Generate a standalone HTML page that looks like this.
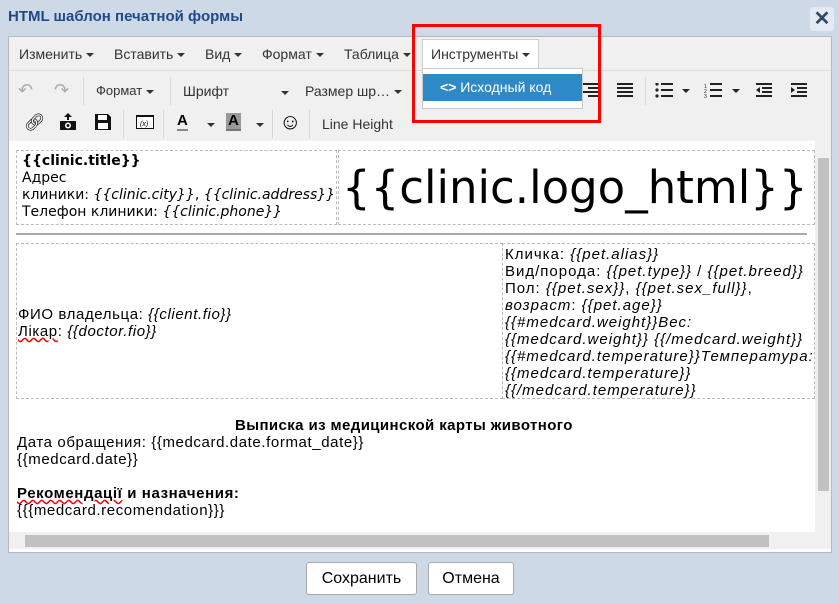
<!DOCTYPE html>
<html><head><meta charset="utf-8"><style>
*{margin:0;padding:0;box-sizing:border-box}
body{width:839px;height:604px;background:#cdd9e6;font-family:"Liberation Sans",sans-serif;position:relative;overflow:hidden;color:#000}
.a{position:absolute;white-space:nowrap}
.title{left:8px;top:8px;font-size:15px;font-weight:bold;color:#1e4a8a}
.close{left:810px;top:7px;width:24px;height:24px;background:#e3eaf2;border-radius:3px;color:#2d4a6e;font-size:20px;font-weight:bold;text-align:center;line-height:24px}
.ed{left:8px;top:36px;width:824px;height:517px;background:#f0f0f0;border:1px solid #b8b8b8}
.mb{font-size:14px;color:#333}
.car{display:inline-block;width:0;height:0;border-left:4px solid transparent;border-right:4px solid transparent;border-top:4px solid #333;vertical-align:middle;margin-left:4px}
.sep{position:absolute;width:1px;background:#d8d8d8}
.ct{left:9px;top:141px;width:806px;height:391px;background:#fff}
.v{font-family:"DejaVu Sans",sans-serif;font-size:14px}
.n{font-size:15px;letter-spacing:0.6px}
i{font-style:italic}
.btn{position:absolute;top:562px;height:33px;background:#fff;border:1px solid #aaa;border-radius:3px;font-size:16px;text-align:center;line-height:31px}
</style></head><body>
<div class="a title">HTML шаблон печатной формы</div>
<div class="a close">✕</div>
<div class="a ed"></div>
<div class="a" style="left:9px;top:70px;width:822px;height:1px;background:#ddd"></div>
<div class="a mb" style="left:19px;top:46px">Изменить<span class="car"></span></div>
<div class="a mb" style="left:114px;top:46px">Вставить<span class="car"></span></div>
<div class="a mb" style="left:205px;top:46px">Вид<span class="car"></span></div>
<div class="a mb" style="left:262px;top:46px">Формат<span class="car"></span></div>
<div class="a mb" style="left:344px;top:46px">Таблица<span class="car"></span></div>
<div class="a" style="left:422px;top:39px;width:117px;height:31px;background:#fff;border:1px solid #ccc;border-bottom:none"></div>
<div class="a mb" style="left:431px;top:46px">Инструменты<span class="car"></span></div>
<div class="a" style="left:18px;top:80px;font-size:18px;color:#aaa">↶</div>
<div class="a" style="left:54px;top:80px;font-size:18px;color:#aaa">↷</div>
<div class="sep" style="left:83px;top:77px;height:28px"></div>
<div class="a mb" style="left:96px;top:83px;font-size:13px">Формат<span class="car"></span></div>
<div class="sep" style="left:170px;top:77px;height:28px"></div>
<div class="a mb" style="left:183px;top:83px">Шрифт</div>
<div class="a" style="left:277px;top:84px"><span class="car"></span></div>
<div class="a mb" style="left:305px;top:83px">Размер шр…<span class="car"></span></div>
<svg class="a" style="left:583px;top:83px" width="230" height="16">
<g fill="#222"><rect x="0" y="0" width="15" height="2"/><rect x="5" y="4" width="10" height="2"/><rect x="0" y="8" width="15" height="2"/><rect x="5" y="12" width="10" height="2"/>
<rect x="34" y="0" width="16" height="2"/><rect x="34" y="4" width="16" height="2"/><rect x="34" y="8" width="16" height="2"/><rect x="34" y="12" width="16" height="2"/>
<circle cx="74" cy="1" r="1.6"/><circle cx="74" cy="7" r="1.6"/><circle cx="74" cy="13" r="1.6"/><rect x="78" y="0" width="12" height="2"/><rect x="78" y="6" width="12" height="2"/><rect x="78" y="12" width="12" height="2"/>
<path d="M99 6h8l-4 4z"/>
<text x="121" y="5" font-size="5">1</text><text x="121" y="10" font-size="5">2</text><text x="121" y="15" font-size="5">3</text><rect x="127" y="0" width="12" height="2"/><rect x="127" y="6" width="12" height="2"/><rect x="127" y="12" width="12" height="2"/>
<path d="M149 6h8l-4 4z"/>
<rect x="173" y="0" width="16" height="2"/><rect x="179" y="4" width="10" height="2"/><rect x="179" y="8" width="10" height="2"/><rect x="173" y="12" width="16" height="2"/><path d="M173 7l4-3v6z"/>
<rect x="208" y="0" width="16" height="2"/><rect x="214" y="4" width="10" height="2"/><rect x="214" y="8" width="10" height="2"/><rect x="208" y="12" width="16" height="2"/><path d="M212 7l-4-3v6z"/>
</g></svg>
<div class="sep" style="left:645px;top:77px;height:28px"></div>
<div class="a" style="left:24px;top:113px;font-size:17px">🔗︎</div>
<svg class="a" style="left:59px;top:113px" width="18" height="18"><path d="M9 0l4 4h-3v3h-2v-3h-3z M1 8h16v9h-16z" fill="#111"/><circle cx="9" cy="12.5" r="3" fill="#fff"/><circle cx="9" cy="12.5" r="1.5" fill="#111"/></svg>
<svg class="a" style="left:95px;top:114px" width="16" height="16"><path d="M0 0h13l3 3v13h-16z" fill="#111"/><rect x="3" y="1" width="9" height="5" fill="#fff"/><rect x="3" y="9" width="10" height="6" fill="#fff"/></svg>
<div class="sep" style="left:123px;top:110px;height:28px"></div>
<svg class="a" style="left:136px;top:115px" width="18" height="14"><rect x="0.5" y="0.5" width="17" height="13" fill="#fff" stroke="#111"/><rect x="0" y="0" width="18" height="2" fill="#111"/><text x="4" y="11" font-size="7" font-style="italic">(x)</text></svg>
<div class="sep" style="left:163px;top:110px;height:28px"></div>
<div class="a" style="left:177px;top:113px;font-size:15px;font-weight:bold;border-bottom:2px solid #888;line-height:16px">A</div>
<div class="a" style="left:203px;top:116px"><span class="car"></span></div>
<div class="a" style="left:226px;top:113px;font-size:15px;font-weight:bold;background:#999;border-bottom:2px solid #777;line-height:16px;padding:0 2px">A</div>
<div class="a" style="left:252px;top:116px"><span class="car"></span></div>
<div class="sep" style="left:272px;top:110px;height:28px"></div>
<div class="a" style="left:279px;top:109px;font-size:22px">☺</div>
<div class="sep" style="left:309px;top:110px;height:28px"></div>
<div class="a mb" style="left:322px;top:116px">Line Height</div>
<div class="a" style="left:422px;top:68px;width:161px;height:41px;background:#fff;border:1px solid #ccc"></div>
<div class="a" style="left:423px;top:74px;width:159px;height:27px;background:#2d8ac7;color:#fff;font-size:14px;line-height:27px;padding-left:17px"><b>&lt;&gt;</b> Исходный код</div>
<div class="a" style="left:412px;top:24px;width:189px;height:99px;border:3px solid #f00"></div>
<div class="a ct"></div>
<div class="a" style="left:16px;top:150px;width:321px;height:75px;border:1px dashed #bbb"></div>
<div class="a" style="left:338px;top:150px;width:477px;height:75px;border:1px dashed #bbb"></div>
<div class="a v" style="left:22px;top:153px;line-height:17px"><b>{{clinic.title}}</b><br>Адрес<br>клиники: <i>{{clinic.city}}</i>, <i>{{clinic.address}}</i><br>Телефон клиники: <i>{{clinic.phone}}</i></div>
<div class="a" style="left:342px;top:158px;font-family:'DejaVu Sans',sans-serif;font-size:45px;line-height:60px">{{clinic.logo_html}}</div>
<div class="a" style="left:16px;top:233px;width:791px;height:2px;background:#aaa"></div>
<div class="a" style="left:16px;top:243px;width:487px;height:156px;border:1px dashed #bbb"></div>
<div class="a" style="left:502px;top:243px;width:313px;height:156px;border:1px dashed #bbb"></div>
<div class="a n" style="left:18px;top:306px;line-height:17px">ФИО владельца: <i>{{client.fio}}</i><br><span style="text-decoration:underline wavy red">Лікар</span>: <i>{{doctor.fio}}</i></div>
<div class="a n" style="left:505px;top:246px;line-height:17px;letter-spacing:1px">Кличка: <i>{{pet.alias}}</i><br>Вид/порода: <i>{{pet.type}}</i> / <i>{{pet.breed}}</i><br>Пол: <i>{{pet.sex}}</i>, <i>{{pet.sex_full}}</i>,<br><i>возраст</i>: <i>{{pet.age}}</i><br><i>{{#medcard.weight}}Вес:</i><br><i>{{medcard.weight}} {{/medcard.weight}}</i><br><i>{{#medcard.temperature}}Температура:</i><br><i>{{medcard.temperature}}</i><br><i>{{/medcard.temperature}}</i></div>
<div class="a n" style="left:235px;top:417px;font-weight:bold;letter-spacing:0.4px">Выписка из медицинской карты животного</div>
<div class="a n" style="left:17px;top:434px;line-height:17px">Дата обращения: {{medcard.date.format_date}}<br>{{medcard.date}}<br><br><b><span style="text-decoration:underline wavy red">Рекомендації</span> и назначения:</b><br>{{{medcard.recomendation}}}</div>
<div class="a" style="left:815px;top:141px;width:16px;height:391px;background:#f0f0f0"></div>
<div class="a" style="left:818px;top:158px;width:11px;height:333px;background:#c1c1c1"></div>
<div class="a" style="left:9px;top:532px;width:822px;height:17px;background:#f0f0f0"></div>
<div class="a" style="left:25px;top:535px;width:744px;height:12px;background:#c1c1c1"></div>
<div class="a" style="left:9px;top:549px;width:822px;height:3px;background:#fff"></div>
<div class="btn" style="left:306px;width:111px">Сохранить</div>
<div class="btn" style="left:428px;width:86px">Отмена</div>
</body></html>
